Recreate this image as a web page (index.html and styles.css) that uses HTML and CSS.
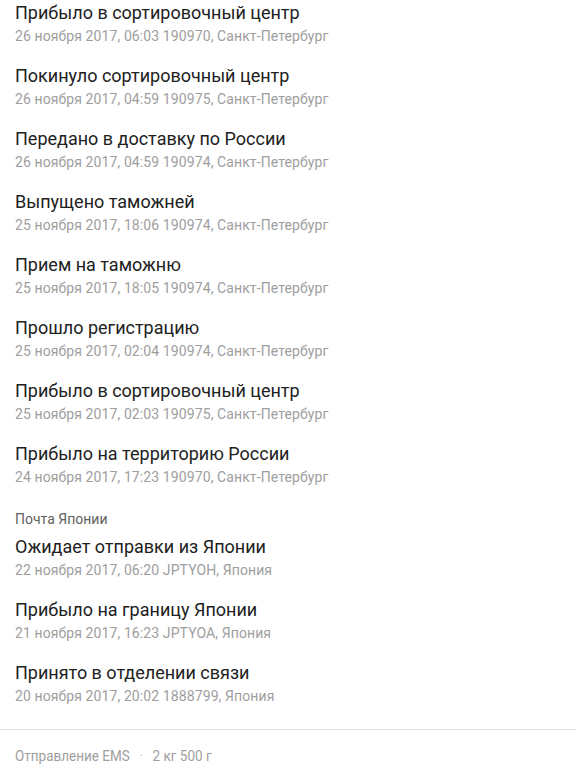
FILE: index.html
```html
<!DOCTYPE html>
<html lang="ru">
<head>
    <meta charset="UTF-8">
    <title>Отслеживание</title>
    <link rel="stylesheet" href="styles.css">
</head>
<body>
<div class="track">
    <ul class="events">
        <li class="event">
            <div class="event_title">Прибыло в сортировочный центр</div>
            <div class="event_info">26 ноября 2017, 06:03 190970, Санкт-Петербург</div>
        </li>
        <li class="event">
            <div class="event_title">Покинуло сортировочный центр</div>
            <div class="event_info">26 ноября 2017, 04:59 190975, Санкт-Петербург</div>
        </li>
        <li class="event">
            <div class="event_title">Передано в доставку по России</div>
            <div class="event_info">26 ноября 2017, 04:59 190974, Санкт-Петербург</div>
        </li>
        <li class="event">
            <div class="event_title">Выпущено таможней</div>
            <div class="event_info">25 ноября 2017, 18:06 190974, Санкт-Петербург</div>
        </li>
        <li class="event">
            <div class="event_title">Прием на таможню</div>
            <div class="event_info">25 ноября 2017, 18:05 190974, Санкт-Петербург</div>
        </li>
        <li class="event">
            <div class="event_title">Прошло регистрацию</div>
            <div class="event_info">25 ноября 2017, 02:04 190974, Санкт-Петербург</div>
        </li>
        <li class="event">
            <div class="event_title">Прибыло в сортировочный центр</div>
            <div class="event_info">25 ноября 2017, 02:03 190975, Санкт-Петербург</div>
        </li>
        <li class="event">
            <div class="event_title">Прибыло на территорию России</div>
            <div class="event_info">24 ноября 2017, 17:23 190970, Санкт-Петербург</div>
        </li>
    </ul>
    <div class="section_name">Почта Японии</div>
    <ul class="events">
        <li class="event">
            <div class="event_title">Ожидает отправки из Японии</div>
            <div class="event_info">22 ноября 2017, 06:20 JPTYOH, Япония</div>
        </li>
        <li class="event">
            <div class="event_title">Прибыло на границу Японии</div>
            <div class="event_info">21 ноября 2017, 16:23 JPTYOA, Япония</div>
        </li>
        <li class="event">
            <div class="event_title">Принято в отделении связи</div>
            <div class="event_info">20 ноября 2017, 20:02 1888799, Япония</div>
        </li>
    </ul>
</div>
<div class="footer">
    <span class="footer_text">Отправление EMS <span class="dot">·</span> 2 кг 500 г</span>
</div>
</body>
</html>
```

FILE: styles.css
```css
*{margin: 0;padding: 0}
body{
    background: #fff;
    font-family: Roboto, "Noto Sans", sans-serif;
}
.track{
    padding: 1px 15px 0 15px;
}
    .events{
        list-style-type: none;
    }
    .event{
        margin-bottom: 17px;
    }
    .events:last-child .event:last-child{
        margin-bottom: 0;
    }
        .event_title{
            font-size: 18px;
            line-height: 24px;
            color: #212121;
        }
        .event_info{
            font-size: 14px;
            line-height: 22px;
            letter-spacing: 0.1px;
            color: #9e9e9e;
        }
    .section_name{
        font-size: 14px;
        line-height: 18px;
        color: #616161;
        padding: 5px 0 7px 0;
    }
.footer{
    margin-top: 22px;
    border-top: 1px solid #e0e0e0;
    padding: 16px 15px 0 15px;
    font-size: 15px;
    line-height: 20px;
    color: #9e9e9e;
}
    /* narrow face, like a condensed font */
    .footer_text{
        display: inline-block;
        transform: scaleX(0.9);
        transform-origin: left center;
        white-space: nowrap;
    }
    .footer .dot{
        color: #c8c8c8;
        margin: 0 7px;
    }
```
